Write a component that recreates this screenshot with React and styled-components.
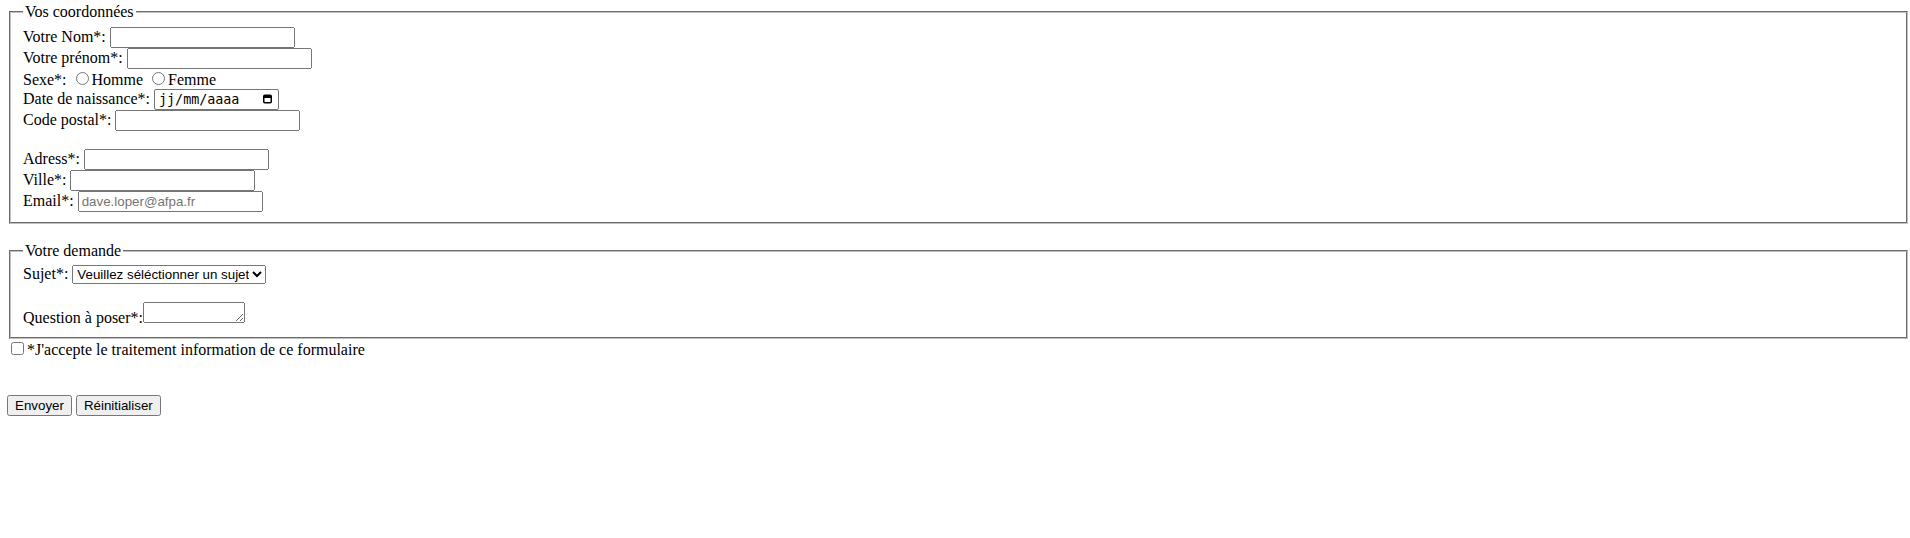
import React from 'react';
import styled, { createGlobalStyle } from 'styled-components';

const GlobalStyle = createGlobalStyle`
  body {
    margin: 3px 0 8px 7px;
    font-family: "Liberation Serif", "Times New Roman", serif;
    font-size: 16px;
    color: #000;
    background: #fff;
  }
`;

const Fieldset = styled.fieldset`
  margin: 0 2px;
  padding: 0.35em 0.75em 0.625em;
  border: 2px groove rgb(192, 192, 192);
`;

const Legend = styled.legend`
  padding: 0 2px;
`;

const Label = styled.label``;

const TextInput = styled.input``;

const Radio = styled.input.attrs({ type: 'radio' })`
  margin: 3px 3px 0 5px;
`;

// date field drawn by hand so the placeholder reads jj/mm/aaaa (French locale)
const DateField = styled.span`
  display: inline-flex;
  align-items: center;
  justify-content: space-between;
  box-sizing: border-box;
  width: 125px;
  height: 21px;
  padding: 0 6px 0 4px;
  border: 1px solid #767676;
  border-radius: 2px;
  background: #fff;
  font-family: "DejaVu Sans Mono", monospace;
  font-size: 13.333px;
  vertical-align: baseline;
  cursor: text;
`;

const DateText = styled.span`
  color: #000;
`;

const CalendarIcon = () => (
  <svg width="9" height="10" viewBox="0 0 9 10" aria-hidden="true">
    <rect x="0.75" y="1.25" width="7.5" height="7.5" rx="1" fill="none" stroke="#000" strokeWidth="1.5" />
    <rect x="1" y="1.5" width="7" height="2.5" fill="#000" />
  </svg>
);

const Select = styled.select``;

const TextArea = styled.textarea``;

const Checkbox = styled.input.attrs({ type: 'checkbox' })``;

const Button = styled.button``;

export default function App() {
  return (
    <>
      <GlobalStyle />
      <form onSubmit={(e) => e.preventDefault()}>
        <Fieldset>
          <Legend>Vos coordonnées</Legend>
          <Label htmlFor="nom">Votre Nom*: </Label>
          <TextInput type="text" id="nom" />
          <br />
          <Label htmlFor="prenom">Votre prénom*: </Label>
          <TextInput type="text" id="prenom" />
          <br />
          <Label>Sexe*: </Label>
          <Radio name="sexe" id="homme" />
          <Label htmlFor="homme">Homme</Label>{' '}
          <Radio name="sexe" id="femme" />
          <Label htmlFor="femme">Femme</Label>
          <br />
          <Label htmlFor="naissance">Date de naissance*: </Label>
          <DateField id="naissance">
            <DateText>jj/mm/aaaa</DateText>
            <CalendarIcon />
          </DateField>
          <br />
          <Label htmlFor="cp">Code postal*: </Label>
          <TextInput type="text" id="cp" />
          <br />
          <br />
          <Label htmlFor="adress">Adress*: </Label>
          <TextInput type="text" id="adress" />
          <br />
          <Label htmlFor="ville">Ville*: </Label>
          <TextInput type="text" id="ville" />
          <br />
          <Label htmlFor="email">Email*: </Label>
          <TextInput type="email" id="email" placeholder="dave.loper@afpa.fr" />
        </Fieldset>
        <br />
        <Fieldset>
          <Legend>Votre demande</Legend>
          <Label htmlFor="sujet">Sujet*: </Label>
          <Select id="sujet" defaultValue="">
            <option value="">Veuillez séléctionner un sujet</option>
            <option value="commande">Mes commandes</option>
            <option value="question">Question sur un produit</option>
            <option value="autre">Autres</option>
          </Select>
          <br />
          <br />
          <Label htmlFor="question">Question à poser*:</Label>
          <TextArea id="question" cols={10} rows={1} />
        </Fieldset>
        <Checkbox id="accept" />
        <Label htmlFor="accept">*J'accepte le traitement information de ce formulaire</Label>
        <br />
        <br />
        <br />
        <Button type="submit">Envoyer</Button> <Button type="reset">Réinitialiser</Button>
      </form>
    </>
  );
}
